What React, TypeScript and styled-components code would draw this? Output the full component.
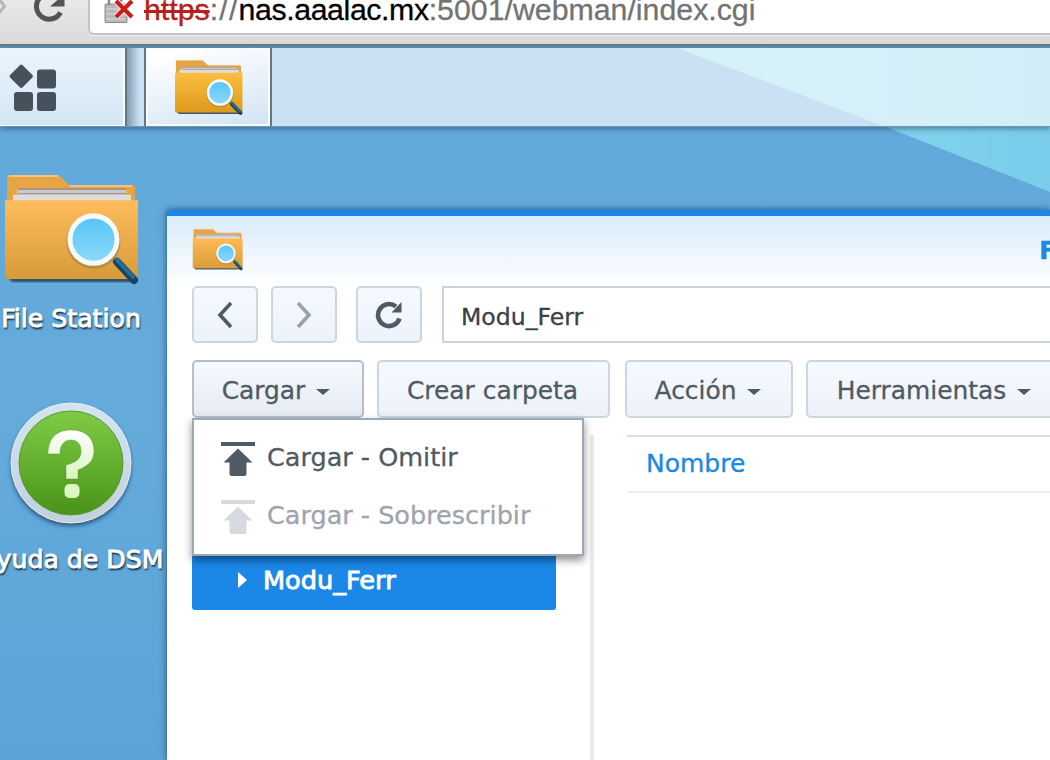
import React from 'react';
import styled, { createGlobalStyle } from 'styled-components';

const Global = createGlobalStyle`
  * { box-sizing: border-box; }
  body { margin: 0; overflow: hidden; font-family: "DejaVu Sans", sans-serif; }
  svg { display: block; flex: none; }
`;

const Screen = styled.div`
  width: 1050px;
  height: 760px;
  display: flex;
  flex-direction: column;
  overflow: hidden;
`;

const BrowserBar = styled.header`
  height: 46px;
  flex: none;
  display: flex;
  align-items: flex-start;
  background: linear-gradient(#e8e8e8, #dadada);
  border-bottom: 2px solid #77797b;
`;

const BrowserControls = styled.div`
  width: 88px;
  flex: none;
`;

const AddressField = styled.div`
  flex: 1;
  height: 35px;
  display: flex;
  background: #fff;
  border: 2px solid #c4c4c4;
  border-top: 0;
  border-right: 0;
  border-radius: 0 0 0 6px;
  box-shadow: 0 1px 0 #eee;
`;

const Url = styled.div`
  margin: -8px 0 0 9px;
  height: 40px;
  line-height: 36px;
  font-family: "Liberation Sans", sans-serif;
  font-size: 30.3px;
  color: #737373;
  -webkit-text-stroke-width: 0.3px;
  white-space: nowrap;
`;

const Scheme = styled.span`
  color: #b9201b;
  text-decoration: line-through;
  text-decoration-thickness: 3px;
`;

const Slashes = styled.span`
  letter-spacing: 1.2px;
`;

const Host = styled.span`
  color: #000;
  letter-spacing: -0.4px;
`;

const Desktop = styled.main`
  flex: 1;
  min-height: 0;
  position: relative;
  display: flex;
  flex-direction: column;
  background: linear-gradient(180deg, #61a8dc 0%, #64abdb 50%, #5ca4d8 100%);
`;

const Wallpaper = styled.svg`
  position: absolute;
  top: 0;
  right: 0;
`;

const Taskbar = styled.nav`
  position: relative;
  height: 81px;
  flex: none;
  display: flex;
  border-top: 2px solid #4f8db5;
  border-bottom: 1px solid #6f98b1;
  background: rgba(255, 255, 255, 0.66);
  background-clip: padding-box;
  box-shadow: 0 2px 5px rgba(20, 60, 90, 0.5);
`;

const StartButton = styled.div`
  width: 127px;
  display: flex;
  align-items: center;
  padding: 1px 0 0 9px;
  background: linear-gradient(#ebf5fd, #d4e6f4);
  border-right: 2px solid #68747f;
  box-shadow: inset -2px -1px 0 #f6fbff;
`;

const TaskGap = styled.div`
  width: 17px;
  background: linear-gradient(90deg, rgba(80, 110, 135, 0.6), rgba(80, 110, 135, 0) 75%);
`;

const TaskButton = styled.div`
  width: 128px;
  display: flex;
  justify-content: center;
  align-items: center;
  padding-top: 2px;
  background: linear-gradient(165deg, #ffffff 10%, #d3e5f4 95%);
  border: solid #68747f;
  border-width: 0 2px;
  box-shadow: inset 0 0 0 2px #f8fcff;
`;

const Workspace = styled.div`
  position: relative;
  flex: 1;
  min-height: 0;
  display: flex;
`;

const Shortcuts = styled.aside`
  width: 167px;
  flex: none;
  padding-top: 48px;
`;

const Shortcut = styled.div<{ $h: number }>`
  width: 142px;
  height: ${p => p.$h}px;
  display: flex;
  flex-direction: column;
  align-items: center;
`;

const ShortcutLabel = styled.div<{ $gap: number; $shift?: number }>`
  margin-top: ${p => p.$gap}px;
  margin-left: ${p => p.$shift ?? 0}px;
  font-size: 25.2px;
  line-height: 32px;
  white-space: nowrap;
  color: #fff;
  -webkit-text-stroke: 0.9px #fff;
  text-shadow: 1px 2px 2px rgba(0, 0, 0, 0.85);
`;

const Window = styled.section`
  flex: 1;
  min-width: 0;
  margin-top: 83px;
  display: flex;
  flex-direction: column;
  padding-left: 25px;
  border-top: 6px solid #1b87e6;
  background: linear-gradient(#d9ebfb, #fff 70px);
  box-shadow: 0 0 7px rgba(15, 45, 75, 0.75);
  -webkit-text-stroke-width: 0.3px;
`;

const TitleBar = styled.div`
  height: 70px;
  flex: none;
  display: flex;
  justify-content: space-between;
  padding-top: 13px;
`;

const Title = styled.div`
  width: 11px;
  margin-top: 5px;
  font-weight: bold;
  font-size: 25.5px;
  line-height: 32px;
  color: #1b87e6;
`;

const NavRow = styled.div`
  height: 57px;
  flex: none;
  display: flex;
`;

const buttonFace = `
  display: flex;
  align-items: center;
  justify-content: center;
  border-radius: 5px;
  background: linear-gradient(#f6faff, #edf2fa);
`;

const NavButton = styled.div<{ $gap: number }>`
  ${buttonFace}
  width: 66px;
  margin-right: ${p => p.$gap}px;
  padding-right: 1px;
  border: 2px solid #cad7e2;
`;

const PathField = styled.div`
  flex: 1;
  display: flex;
  align-items: center;
  padding: 4px 0 0 17px;
  border: 2px solid #c8d5e0;
  border-right: 0;
  background: #fff;
  font-size: 23.6px;
  color: #3b4047;
`;

const Toolbar = styled.div`
  height: 58px;
  flex: none;
  display: flex;
  margin-top: 17px;
`;

const ToolButton = styled.div<{ $w: number; $gap: number; $open?: boolean }>`
  ${buttonFace}
  position: relative;
  flex: none;
  width: ${p => p.$w}px;
  margin-right: ${p => p.$gap}px;
  gap: 11px;
  padding: 3px 2px 0 0;
  border: 2px solid ${p => (p.$open ? '#b4bfca' : '#cad7e2')};
  ${p => p.$open && 'background: linear-gradient(#f6faff, #e6ebf3); padding-right: 4px;'}
  font-size: 24.9px;
  color: #505a64;
`;

const Caret = styled.span`
  margin-top: 2px;
  border: solid transparent;
  border-width: 6.5px 7px 0;
  border-top-color: #505a64;
`;

const Menu = styled.div`
  position: absolute;
  z-index: 2;
  top: 56px;
  left: -2px;
  width: 392px;
  height: 138px;
  padding: 8px 0 0 27px;
  background: #fff;
  border: 2px solid #9ca9b6;
  box-shadow: 0 4px 8px rgba(0, 0, 0, 0.45);
`;

const MenuItem = styled.div<{ $off?: boolean }>`
  height: 58px;
  display: flex;
  align-items: center;
  gap: 12px;
  font-size: 25.5px;
  white-space: nowrap;
  color: ${p => (p.$off ? '#9da4af' : '#505a64')};
  svg { fill: ${p => (p.$off ? '#d6dae0' : '#505a64')}; margin-top: 3px; }
`;

const Body = styled.div`
  flex: 1;
  display: flex;
  margin-top: 17px;
`;

const Tree = styled.div`
  width: 402px;
  padding-top: 116px;
  border-right: 4px solid #e9e9eb;
`;

const TreeRow = styled.div`
  width: 364px;
  height: 59px;
  display: flex;
  align-items: center;
  gap: 16px;
  padding: 0 0 2px 46px;
  border-radius: 3px;
  background: #1b87e6;
  color: #fff;
  font-size: 25.6px;
  -webkit-text-stroke: 0.9px #fff;
`;

const TreeArrow = styled.span`
  border: solid transparent;
  border-width: 8.5px 0 8.5px 9px;
  border-left-color: #fff;
`;

const FileList = styled.div`
  flex: 1;
  margin-left: 33px;
`;

const ColumnHeader = styled.div`
  height: 58px;
  display: flex;
  align-items: center;
  padding: 0 0 1px 19px;
  border-top: 2px solid #d4e0ec;
  border-bottom: 2px solid #eaeff6;
  font-size: 25px;
  color: #1b87e6;
`;

function Folder({ w, h, id, top, bottom }: { w: number; h: number; id: string; top: string; bottom: string }) {
  return (
    <svg width={w} height={h} viewBox="0 0 136 110" preserveAspectRatio="none" overflow="visible">
      <defs>
        <linearGradient id={`${id}f`} x2="0" y2="1">
          <stop stopColor={top} />
          <stop offset="1" stopColor={bottom} />
        </linearGradient>
        <linearGradient id={`${id}g`} x2="0" y2="1">
          <stop stopColor="#55c4f6" />
          <stop offset="1" stopColor="#8cdafb" />
        </linearGradient>
        <filter id={`${id}s`}><feGaussianBlur stdDeviation="1.2" /></filter>
      </defs>
      <path d="M6 102h126l-2 4H9z" fill="#1c3448" opacity=".8" filter={`url(#${id}s)`} />
      <path d="M4 2q0-2 3-2h47q3 0 5 3l7 7h63q3 0 3 3v20H4z" fill="#e6a445" />
      <path d="M6 1h49M67 11h62" stroke="#f7cd92" strokeWidth="1.5" />
      <path d="M14 14h109v12H14z" fill="#cbc7cb" />
      <path d="M15 14h108M15 18.500h108" stroke="#8f8884" strokeWidth="1" />
      <path d="M10 19.500h118v8H10z" fill="#e0dcda" />
      <path d="M2 25h133v76q0 2-2 2H4q-2 0-2-2z" fill={`url(#${id}f)`} />
      <path d="M114 86l17 18" stroke="#174560" strokeWidth="8" strokeLinecap="round" />
      <path d="M114 84l16 17" stroke="#20719b" strokeWidth="4" strokeLinecap="round" />
      <circle cx="90.500" cy="66" r="24.500" fill="none" stroke="#8b7444" strokeOpacity=".45" strokeWidth="5" />
      <circle cx="90.500" cy="64" r="23.500" fill={`url(#${id}g)`} stroke="#f5f9f8" strokeWidth="5" />
    </svg>
  );
}

const Reload = ({ size, color, width }: { size: number; color: string; width: number }) => (
  <svg width={size} height={size} viewBox="0 0 28 28">
    <path d="M24.500 17.500A11 11 0 1 1 21 5.500" fill="none" stroke={color} strokeWidth={width} />
    <path d="M26.500 1v10.500H16.500z" fill={color} />
  </svg>
);

const UploadIcon = () => (
  <svg width="34" height="34" viewBox="0 0 34 34">
    <path d="M0 0h34v4H0zM17 6.500L31.500 20.500H25.500V32q0 2-2 2h-13q-2 0-2-2V20.500H2.500z" />
  </svg>
);

const Chevron = ({ d, color }: { d: string; color: string }) => (
  <svg width="16" height="26" viewBox="0 0 16 26">
    <path d={d} fill="none" stroke={color} strokeWidth="3.600" />
  </svg>
);

export default function App() {
  return (
    <Screen>
      <Global />
      <BrowserBar>
        <BrowserControls>
          <svg width="88" height="36" viewBox="0 0 88 36">
            <path d="M0 0l4.500 6.500L-2 14" fill="none" stroke="#b5b5b5" strokeWidth="3" />
            <path d="M60.500 12.500A12.800 12.800 0 1 1 58 -3" fill="none" stroke="#535353" strokeWidth="5" />
            <path d="M50 6.500h14.500V-6z" fill="#535353" />
          </svg>
        </BrowserControls>
        <AddressField>
          <svg width="45" height="28" viewBox="90 0 45 28">
            <rect x="105" y="4" width="22" height="18.500" rx="1" fill="#b9b9b9" stroke="#8a8a8a" />
            <path d="M106 9h19M106 14h19M106 19h19" stroke="#cbcbcb" strokeWidth="2" />
            <path d="M109 5V-4M121 5V-4" stroke="#8a8a8a" strokeWidth="2.500" />
            <path d="M116 1l16 16M132 1l-16 16" stroke="#fff" strokeWidth="6" />
            <path d="M116 1l16 16M132 1l-16 16" stroke="#cb1d16" strokeWidth="4.200" />
          </svg>
          <Url>
            <Scheme>https</Scheme><Slashes>://</Slashes><Host>nas.aaalac.mx</Host>:5001/webman/index.cgi
          </Url>
        </AddressField>
      </BrowserBar>

      <Desktop>
        <Wallpaper width="378" height="146" viewBox="0 0 378 146">
          <defs>
            <linearGradient id="ray">
              <stop stopColor="#8dd7ee" />
              <stop offset="1" stopColor="#79cdea" />
            </linearGradient>
          </defs>
          <path d="M0 0h378v146L214 81z" fill="url(#ray)" />
        </Wallpaper>
        <Taskbar>
          <StartButton>
            <svg width="48" height="47" viewBox="0 0 48 47" fill="#46515c">
              <rect x="3.500" y="3.500" width="17.500" height="17.500" rx="2" transform="rotate(45 12.250 12.250)" />
              <rect x="28" y="5.500" width="19" height="19" rx="3" />
              <rect x="5" y="28" width="19" height="19" rx="3" />
              <rect x="28" y="28" width="19" height="19" rx="3" />
            </svg>
          </StartButton>
          <TaskGap />
          <TaskButton>
            <Folder w={69} h={56} id="task" top="#fdbd40" bottom="#dc9b1c" />
          </TaskButton>
        </Taskbar>

        <Workspace>
          <Shortcuts>
            <Shortcut $h={226}>
              <Folder w={136} h={111} id="desk" top="#fdbd5c" bottom="#d99a38" />
              <ShortcutLabel $gap={17}>File Station</ShortcutLabel>
            </Shortcut>
            <Shortcut $h={200}>
              <svg width="124" height="126" viewBox="0 0 124 126" overflow="visible">
                <defs>
                  <linearGradient id="help" x2="0" y2="1">
                    <stop stopColor="#80cb45" />
                    <stop offset="1" stopColor="#499419" />
                  </linearGradient>
                  <linearGradient id="rim" x2="0" y2="1">
                    <stop stopColor="#d5e4f1" />
                    <stop offset="1" stopColor="#c2d0de" />
                  </linearGradient>
                  <linearGradient id="mark" x2="0" y2="1">
                    <stop stopColor="#fff" />
                    <stop offset="1" stopColor="#d8f5bd" />
                  </linearGradient>
                  <filter id="soft"><feGaussianBlur stdDeviation="2" /></filter>
                </defs>
                <circle cx="62" cy="65" r="60" fill="#1c4568" opacity=".8" filter="url(#soft)" />
                <circle cx="62" cy="62" r="60" fill="url(#rim)" stroke="#e3edf5" />
                <circle cx="62" cy="62" r="52" fill="url(#help)" stroke="#579833" />
                <path
                  d="M39 53C39 37 48 29 62 29c15 0 23 8 23 21 0 9-5 15-16 19v9H57V64c12-3 15-7 15-14 0-7-4-11-10-11-7 0-11 5-11 14z"
                  fill="url(#mark)" stroke="#3c8716" strokeOpacity=".35"
                />
                <rect x="55.500" y="83" width="15" height="14" rx="5" fill="#dcf6c5" />
              </svg>
              <ShortcutLabel $gap={17} $shift={18}>yuda de DSM</ShortcutLabel>
            </Shortcut>
          </Shortcuts>

          <Window>
            <TitleBar>
              <Folder w={51} h={42} id="win" top="#fdba55" bottom="#dc9c3b" />
              <Title>F</Title>
            </TitleBar>
            <NavRow>
              <NavButton $gap={13}><Chevron d="M14 1L3 13l11 12" color="#505a64" /></NavButton>
              <NavButton $gap={19}><Chevron d="M2 1l11 12L2 25" color="#98a1ab" /></NavButton>
              <NavButton $gap={20}><Reload size={28} color="#505a64" width={4.6} /></NavButton>
              <PathField>Modu_Ferr</PathField>
            </NavRow>
            <Toolbar>
              <ToolButton $w={172} $gap={13} $open>
                Cargar<Caret />
                <Menu>
                  <MenuItem><UploadIcon />Cargar - Omitir</MenuItem>
                  <MenuItem $off><UploadIcon />Cargar - Sobrescribir</MenuItem>
                </Menu>
              </ToolButton>
              <ToolButton $w={233} $gap={15}>Crear carpeta</ToolButton>
              <ToolButton $w={168} $gap={13}>Acción<Caret /></ToolButton>
              <ToolButton $w={258} $gap={0}>Herramientas<Caret /></ToolButton>
            </Toolbar>
            <Body>
              <Tree>
                <TreeRow><TreeArrow />Modu_Ferr</TreeRow>
              </Tree>
              <FileList>
                <ColumnHeader>Nombre</ColumnHeader>
              </FileList>
            </Body>
          </Window>
        </Workspace>
      </Desktop>
    </Screen>
  );
}
